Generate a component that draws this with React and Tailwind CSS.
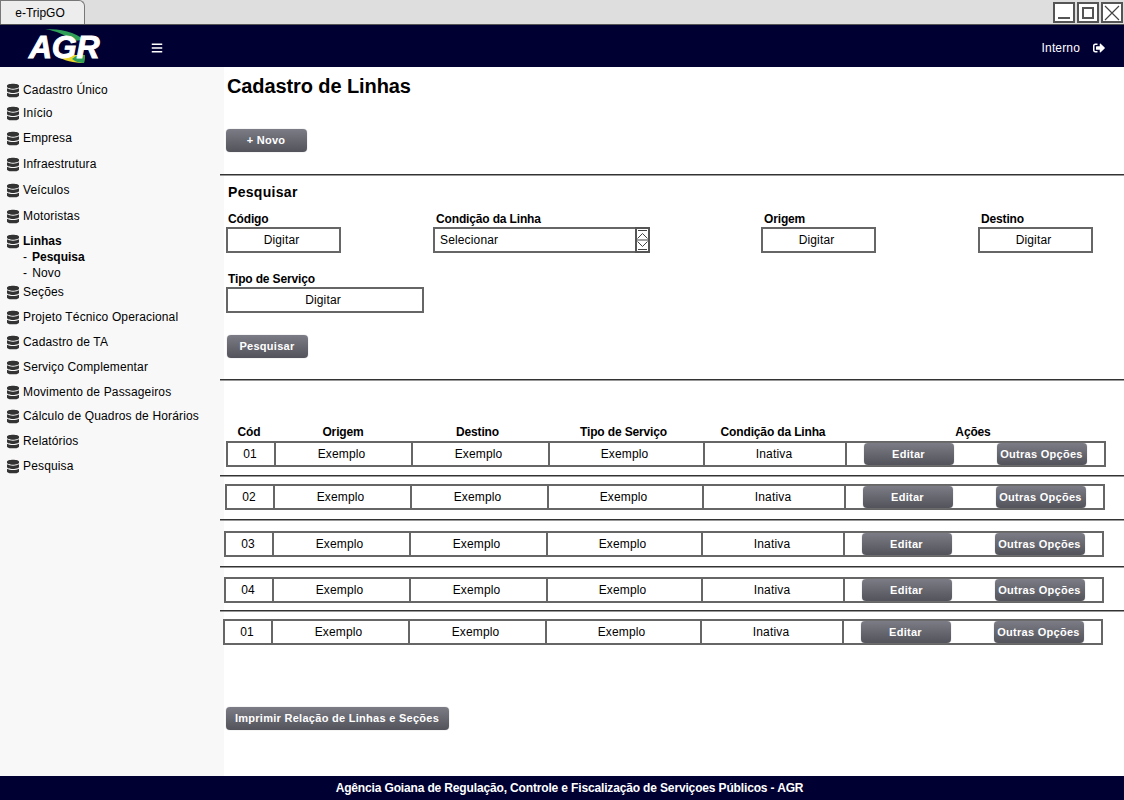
import React from "react";
import { FaDatabase, FaBars, FaSignOutAlt } from "react-icons/fa";

const nav = [
  ["Cadastro Único", "mt-[14px]"],
  ["Início", "mt-[5px]"],
  ["Empresa", "mt-[7px]"],
  ["Infraestrutura", "mt-[8px]"],
  ["Veículos", "mt-[8px]"],
  ["Motoristas", "mt-[8px]"],
];
const nav2 = [
  ["Seções", "mt-[2px]"],
  ["Projeto Técnico Operacional", "mt-[7px]"],
  ["Cadastro de TA", "mt-[7px]"],
  ["Serviço Complementar", "mt-[7px]"],
  ["Movimento de Passageiros", "mt-[7px]"],
  ["Cálculo de Quadros de Horários", "mt-[6px]"],
  ["Relatórios", "mt-[7px]"],
  ["Pesquisa", "mt-[7px]"],
];

const rule = "h-[2px] -ml-[4px] bg-gradient-to-b from-[#333333] from-50% to-[#999999] to-50%";

function NavItem({ label, cls, bold }) {
  return (
    <div className={`flex items-center h-[18px] ${cls}`}>
      <FaDatabase className="w-[12px] h-[15px] ml-[7px] mr-[4px] text-[#333333]" />
      <span className={bold ? "font-bold tracking-[0px]" : ""}>{label}</span>
    </div>
  );
}

function Btn({ children, cls }) {
  return (
    <div className={`flex items-center justify-center pr-[1px] h-[23px] rounded-[4px] bg-gradient-to-b from-[#7c7c86] to-[#53535b] text-white font-bold text-[11px] tracking-[0.28px] shadow-[0_0_1px_#999] ${cls}`}>
      {children}
    </div>
  );
}

function Field({ label, cls, w, lab = "ml-[2px]", children }) {
  return (
    <div className={cls}>
      <div className={`font-bold text-[12px] tracking-[-0.15px] h-[15px] leading-[15px] ${lab}`}>{label}</div>
      <div className={`flex items-center justify-center pr-[4px] h-[26px] border-2 border-[#666666] ${w}`}>{children}</div>
    </div>
  );
}

function Row({ code, offset, mt, after }) {
  const cell = "flex items-center justify-center h-full border-r-2 border-[#666666]";
  return (
    <>
      <div className={`flex items-center h-[26px] w-[880px] border-2 border-[#666666] bg-white ${offset} ${mt}`}>
        <div className={`${cell} pr-[2px] w-[48px]`}>{code}</div>
        <div className={`${cell} pr-[4px] w-[137px]`}>Exemplo</div>
        <div className={`${cell} pr-[4px] w-[137px]`}>Exemplo</div>
        <div className={`${cell} pr-[4px] w-[155px]`}>Exemplo</div>
        <div className={`${cell} pr-[2px] w-[142px]`}>Inativa</div>
        <Btn cls="w-[90px] ml-[17px] !h-[22px]">Editar</Btn>
        <Btn cls="w-[90px] ml-[43px] !h-[22px]">Outras Opções</Btn>
      </div>
      {after && <div className={`${rule} ${after}`} />}
    </>
  );
}

export default function App() {
  return (
    <div className="w-[1124px] h-[800px] flex flex-col bg-white text-[12px] text-black tracking-[0.15px] overflow-hidden font-['Liberation_Sans',Arial,sans-serif]">
      <div className="h-[25px] bg-[#dedede] border-b border-[#555555] flex items-end justify-between shrink-0">
        <div className="w-[85px] h-[24px] bg-[#ededed] border border-b-0 border-[#777777] rounded-tr-[6px] flex items-center justify-center pr-[5px] text-[12px] tracking-normal">e-TripGO</div>
        <div className="flex gap-[2px] mr-[1px] mb-[1px]">
          <div className="w-[22px] h-[21px] bg-white border-2 border-[#555555] flex items-end justify-center pb-[2px]"><div className="w-[12px] h-[2px] bg-[#555555]" /></div>
          <div className="w-[22px] h-[21px] bg-white border-2 border-[#555555] flex items-center justify-center"><div className="w-[12px] h-[12px] border-2 border-[#555555]" /></div>
          <div className="w-[22px] h-[21px] bg-white border-2 border-[#555555] flex items-center justify-center">
            <svg width="16" height="16" viewBox="0 0 16 16" stroke="#444" strokeWidth="1.2"><path d="M1 1 15 15M15 1 1 15" /></svg>
          </div>
        </div>
      </div>

      <div className="h-[42px] bg-[#000033] flex items-center pt-[4px] text-white shrink-0">
        <div className="relative w-[72px] h-[34px] ml-[28px] -mt-[4px]">
          <svg className="absolute inset-0" width="72" height="34" viewBox="0 0 72 34">
            <path d="M17 0C32 0 48 3 56 11L44 12C38 6 28 2 17 0Z" fill="#2f9e57" />
            <path d="M27 26C36 32 46 34 56 34L57 26Z" fill="#e8d42a" />
            <path d="M44 30C48 33 52 34 56 34L57 26L48 27Z" fill="#2f9e57" />
          </svg>
          <span className="absolute left-[1px] top-[4px] text-[32px] leading-[28px] font-bold italic tracking-[-0.3px] text-white [-webkit-text-stroke:1px_white]">AGR</span>
        </div>
        <FaBars className="ml-[51px] w-[12px] h-[12px] text-white" />
        <div className="ml-auto mr-[13px]">Interno</div>
        <FaSignOutAlt className="w-[12px] h-[12px] mr-[19px] text-white" />
      </div>

      <div className="flex flex-1 min-h-0">
        <aside className="w-[224px] shrink-0 bg-[#f8f8f8]">
          {nav.map(([l, c]) => <NavItem key={l} label={l} cls={c} />)}
          <NavItem label="Linhas" cls="mt-[7px]" bold />
          <div className="ml-[23px] font-bold tracking-[0px] h-[16px] leading-[16px] -mt-[1px]"><span className="font-normal mr-[5px]">-</span>Pesquisa</div>
          <div className="ml-[23px] h-[16px] leading-[16px]"><span className="mr-[5px]">-</span>Novo</div>
          {nav2.map(([l, c]) => <NavItem key={l} label={l} cls={c} />)}
        </aside>

        <main className="flex-1 min-w-0 flex flex-col">
          <h1 className="ml-[3px] mt-[7px] h-[24px] leading-[24px] text-[20px] font-bold tracking-[-0.1px]">Cadastro de Linhas</h1>
          <Btn cls="ml-[2px] mt-[31px] w-[81px]">+ Novo</Btn>
          <div className={`${rule} mt-[22px]`} />
          <div className="ml-[4px] mt-[7px] h-[18px] leading-[18px] text-[14px] font-bold tracking-[0.3px]">Pesquisar</div>

          <div className="flex mt-[11px] ml-[2px]">
            <Field label="Código" w="w-[115px]" cls="w-[207px]">Digitar</Field>
            <div className="w-[328px]">
              <div className="font-bold tracking-[-0.15px] h-[15px] leading-[15px] ml-[3px]">Condição da Linha</div>
              <div className="flex items-center h-[26px] w-[217px] border-2 border-[#666666] pl-[5px] justify-between">
                <span>Selecionar</span>
                <div className="w-[15px] h-[26px] -mr-[2px] border-2 border-[#555555] flex items-center justify-center shrink-0">
                  <svg width="11" height="22" viewBox="0 0 11 22" fill="none" stroke="#444" strokeWidth="1"><path d="M1 1.5H10M0.5 9.5 5.5 4.5 10.5 9.5M0 11H11M0.5 12.5 5.5 17.5 10.5 12.5M1 20.5H10" /></svg>
                </div>
              </div>
            </div>
            <Field label="Origem" w="w-[115px]" lab="ml-[3px]" cls="w-[217px]">Digitar</Field>
            <Field label="Destino" w="w-[115px]" lab="ml-[3px]">Digitar</Field>
          </div>
          <Field label="Tipo de Serviço" w="w-[198px]" cls="mt-[19px] ml-[2px]">Digitar</Field>

          <Btn cls="ml-[3px] mt-[22px] w-[81px]">Pesquisar</Btn>
          <div className={`${rule} mt-[21px]`} />

          <div className="flex mt-[42px] ml-[2px] h-[17px] items-center font-bold tracking-[-0.15px]">
            <div className="w-[46px] text-center">Cód</div>
            <div className="w-[142px] text-center">Origem</div>
            <div className="w-[127px] text-center">Destino</div>
            <div className="w-[165px] text-center">Tipo de Serviço</div>
            <div className="w-[134px] text-center">Condição da Linha</div>
            <div className="w-[266px] text-center">Ações</div>
          </div>

          <Row code="01" offset="ml-[2px]" mt="mt-[1px]" after="mt-[8px]" />
          <Row code="02" offset="ml-[1px]" mt="mt-[7px]" after="mt-[9px]" />
          <Row code="03" offset="ml-[0px]" mt="mt-[10px]" after="mt-[9px]" />
          <Row code="04" offset="ml-[0px]" mt="mt-[9px]" after="mt-[7px]" />
          <Row code="01" offset="-ml-[1px]" mt="mt-[7px]" />

          <Btn cls="ml-[2px] mt-[62px] w-[223px]">Imprimir Relação de Linhas e Seções</Btn>
        </main>
      </div>

      <div className="h-[24px] bg-[#000033] text-white font-bold tracking-[-0.15px] flex items-center justify-center pl-[15px] shrink-0">Agência Goiana de Regulação, Controle e Fiscalização de Serviçoes Públicos - AGR</div>
    </div>
  );
}
